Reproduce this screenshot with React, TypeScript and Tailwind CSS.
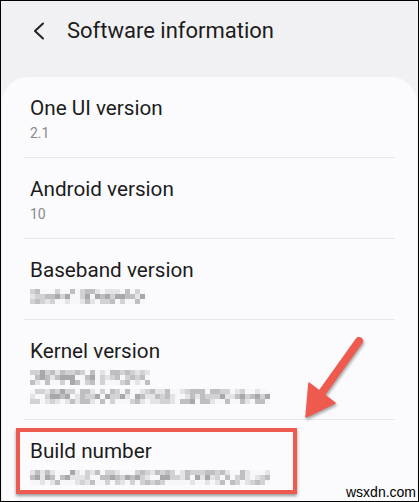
import React from 'react'

const shades = ['bg-[#f7f7f9]', 'bg-[#e4e4e6]', 'bg-[#d2d2d4]', 'bg-[#bfbfc1]', 'bg-[#a8a8aa]']

// blurred value, drawn as a 5px mosaic
const Mosaic: React.FC<{ cols: number; seed: number }> = ({ cols, seed }) => {
  let s = seed
  const next = () => {
    s = (s * 9301 + 49297) % 233280
    return s / 233280
  }
  const rows = Array.from({ length: 3 }, (_, ri) =>
    Array.from({ length: cols }, () => {
      const r = next()
      // middle row is darker, like the body of the letters
      const bias = ri === 1 ? 0.15 : -0.1
      const v = r + bias
      return v < 0.3 ? 0 : v < 0.5 ? 1 : v < 0.7 ? 2 : v < 0.88 ? 3 : 4
    })
  )
  return (
    <div className="flex flex-col">
      {rows.map((row, i) => (
        <div key={i} className="flex">
          {row.map((v, j) => (
            <div key={j} className={`w-[5px] h-[5px] ${shades[v]}`} />
          ))}
        </div>
      ))}
    </div>
  )
}

interface Row {
  title: string
  value?: string
  blur?: { cols: number; seed: number }[]
}

const rows: Row[] = [
  { title: 'One UI version', value: '2.1' },
  { title: 'Android version', value: '10' },
  { title: 'Baseband version', blur: [{ cols: 23, seed: 11 }] },
  { title: 'Kernel version', blur: [{ cols: 24, seed: 37 }, { cols: 48, seed: 73 }] },
  { title: 'Build number', blur: [{ cols: 48, seed: 5 }] },
]

export default function App() {
  return (
    <div
      className="relative w-[419px] h-[502px] overflow-hidden border border-black bg-[#f1f1f3] text-[#1c1c1c]"
      style={{ fontFamily: 'Roboto, "Noto Sans", sans-serif' }}
    >
      <div className="flex items-center h-[60px]">
        <svg className="ml-[31px] w-[13px] h-[18px]" viewBox="0 0 13 18" fill="none">
          <path d="M11 1.5L3 9l8 7.5" stroke="#222" strokeWidth="2" strokeLinecap="round" strokeLinejoin="round" />
        </svg>
        <span className="ml-[22px] text-[22px] leading-none">Software information</span>
      </div>

      <div className="mx-px mt-[16px] h-[440px] rounded-t-[26px] bg-[#fbfbfd]">
        {rows.map((row, i) => (
          <div key={row.title}>
            {i > 0 && <div className="mx-[22px] h-px bg-[#e7e7e9]" />}
            <div className="px-[28px] pt-[19px] pb-[14px]">
              <div className="text-[20.7px] leading-[24px]">{row.title}</div>
              <div className="mt-[3px]">
                {row.value && <div className="text-[14px] leading-[20px] text-[#8a8a8c]">{row.value}</div>}
                {row.blur &&
                  row.blur.map((b, k) => (
                    <div key={k} className={k === 0 ? 'pt-[4px] pb-[1px]' : 'pt-[3px] pb-[1px]'}>
                      <Mosaic cols={b.cols} seed={b.seed} />
                    </div>
                  ))}
              </div>
            </div>
          </div>
        ))}
      </div>

      {/* annotation */}
      <div className="absolute left-[15px] top-[427px] w-[281px] h-[66px] border-[4px] border-[#ec5a50] shadow-[0_2px_3px_rgba(0,0,0,0.4)]" />
      <svg
        className="absolute left-0 top-0 w-[419px] h-[502px] pointer-events-none"
        viewBox="0 0 419 502"
        style={{ filter: 'drop-shadow(1px 2px 1.5px rgba(0,0,0,0.35))' }}
      >
        <path d="M358 340L318 396" stroke="#ef5a4f" strokeWidth="8" strokeLinecap="round" />
        <path d="M305 416L308 382L334 402Z" fill="#ef5a4f" stroke="#ef5a4f" strokeWidth="1.5" strokeLinejoin="round" />
      </svg>
      <div className="absolute left-[345px] top-[483px] text-[14px] leading-[16px] text-black" style={{ fontFamily: '"Liberation Sans", sans-serif' }}>
        wsxdn.com
      </div>
    </div>
  )
}
